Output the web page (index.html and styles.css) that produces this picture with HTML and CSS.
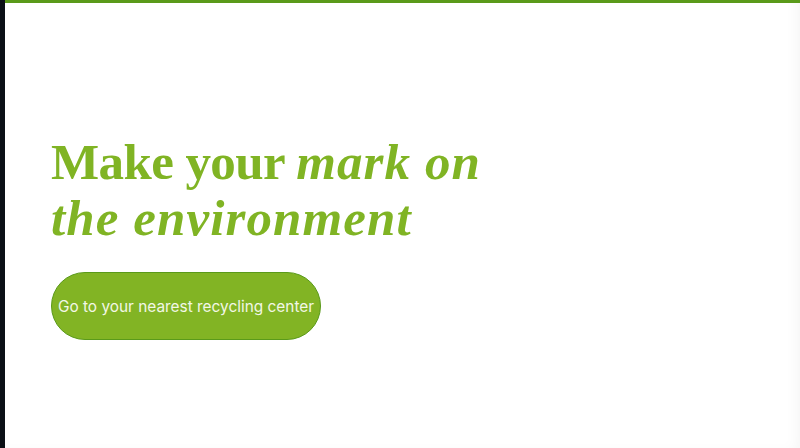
FILE: index.html
```html
<!DOCTYPE html>
<html lang="en">
<head>
<meta charset="utf-8">
<title>Make your mark on the environment</title>
<link rel="stylesheet" href="styles.css">
</head>
<body>
<div class="page">
  <div class="strip"></div>
  <main class="main">
    <section class="hero">
      <h1 class="title">Make your <em>mark on<br>the environment</em></h1>
      <a class="cta" href="#">Go to your nearest recycling center</a>
    </section>
  </main>
</div>
</body>
</html>
```
FILE: styles.css
```css
html, body {
  margin: 0;
  padding: 0;
  height: 100%;
  background: #ffffff;
}
.page {
  display: flex;
  height: 448px;
  overflow: hidden;
}
.strip {
  width: 5px;
  flex: none;
  background: #0b1016;
}
.main {
  flex: 1;
  border-top: 3px solid #5a9a1a;
  box-shadow: inset -14px -6px 16px -14px rgba(0,0,0,0.06);
}
.hero {
  padding: 131px 0 0 46px;
  display: flex;
  flex-direction: column;
  align-items: flex-start;
}
.title {
  margin: 0;
  font-family: "Liberation Serif", "Times New Roman", serif;
  font-weight: 700;
  font-size: 51px;
  line-height: 56px;
  color: #80b424;
  letter-spacing: -0.6px;
}
.title em {
  font-style: italic;
  letter-spacing: 1.1px;
}
.cta {
  margin-top: 26px;
  box-sizing: border-box;
  width: 270px;
  height: 68px;
  display: flex;
  align-items: center;
  justify-content: center;
  background: #82b424;
  border: 1px solid #5a9a1a;
  border-radius: 34px;
  color: #f2f7e6;
  font-family: "Inter", "Noto Sans", sans-serif;
  font-size: 15.4px;
  text-decoration: none;
  white-space: nowrap;
}
```
